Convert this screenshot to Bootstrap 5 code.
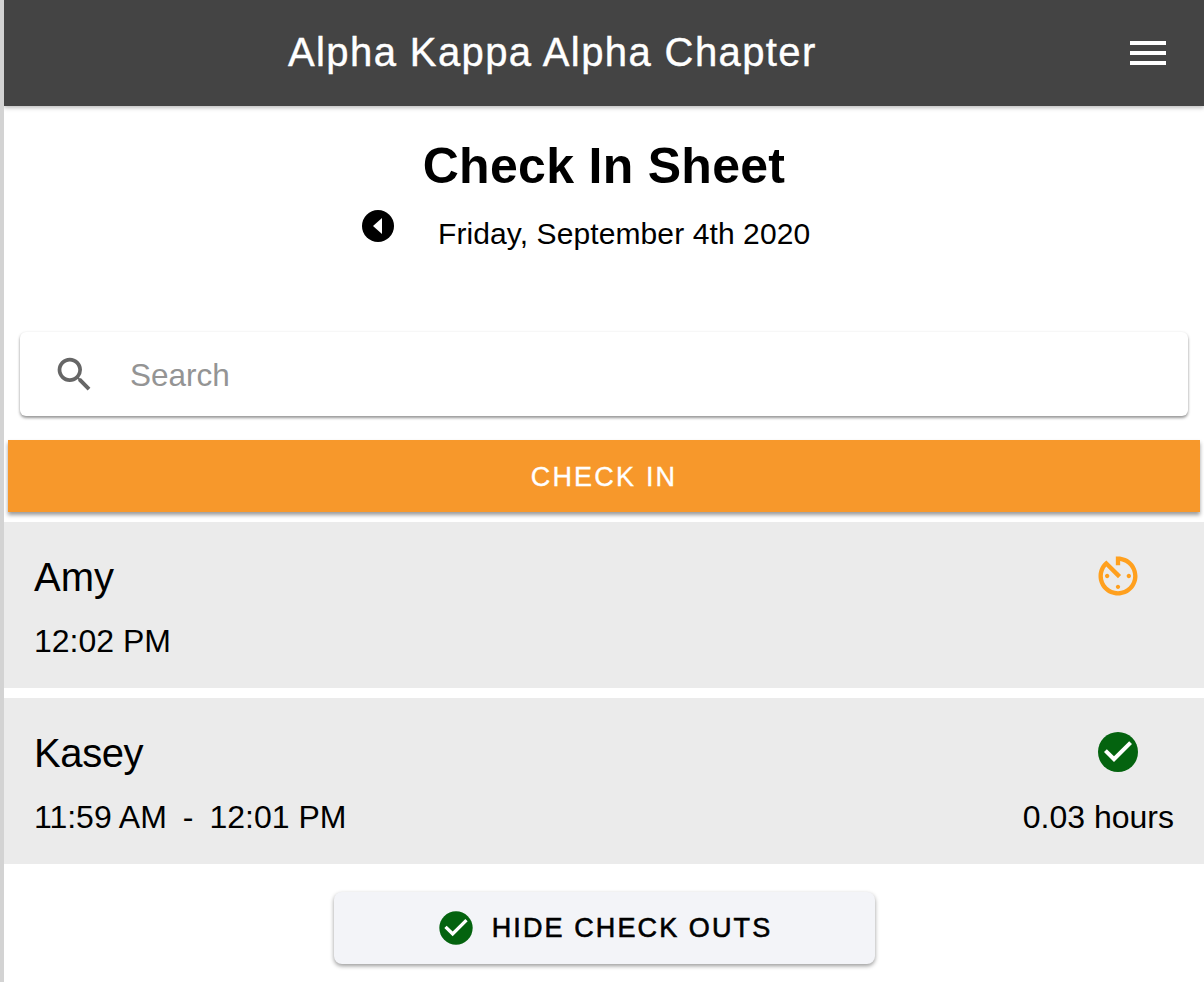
<!DOCTYPE html>
<html lang="en">
<head>
<meta charset="utf-8">
<title>Check In Sheet</title>
<link href="https://cdn.jsdelivr.net/npm/bootstrap@5.3.0/dist/css/bootstrap.min.css" rel="stylesheet">
<style>
html,body{height:982px;overflow:hidden}
body{border-left:4px solid #d3d3d3;font-family:"Liberation Sans",Arial,sans-serif;color:#000;background:#fff}
.top-bar{height:106px;background:#444;color:#fff;box-shadow:0 2px 4px rgba(0,0,0,.25);padding-left:284px;padding-right:38px}
.top-title{font-size:40px;letter-spacing:1.4px;line-height:1;margin:0 0 2px;font-weight:400;-webkit-text-stroke:.4px #fff}
.burger{width:36px;display:flex;flex-direction:column;gap:6px;background:none;border:0;padding:0}
.burger span{display:block;height:4px;background:#fff}
.sheet-title{font-size:50px;letter-spacing:.3px;font-weight:700;line-height:56px;margin:0;padding-top:32px;text-align:center}
.date-row{height:42px;margin-top:16px;padding-left:358px}
.date-text{font-size:30px;letter-spacing:.1px;line-height:36px;margin:6px 0 0 44px}
.search-box{height:84px;margin:80px 16px 0;background:#fff;border-radius:6px;box-shadow:0 2px 3px rgba(0,0,0,.4),0 0 3px rgba(0,0,0,.06);padding-left:32px}
.search-input{border:0;outline:0;flex:1;font-family:"Liberation Sans",Arial,sans-serif;font-size:31.5px;margin-left:31px;color:#333;background:transparent;padding:4px 0 0 2px}
.search-input::placeholder{color:#949494;opacity:1}
.checkin-btn{display:block;height:72px;width:calc(100% - 8px);margin:24px 4px 0;padding-top:4px;background:#f7982b;color:#fff;border:0;border-radius:0;font-size:27px;letter-spacing:2.2px;-webkit-text-stroke:.35px #fff;box-shadow:0 3px 4px rgba(0,0,0,.4)}
.entry{background:#ebebeb;height:166px;padding:30px 30px 0}
.entry-first{margin-top:10px}
.entry-next{margin-top:10px}
.entry-name{font-size:40px;line-height:50px}
.name-tight{letter-spacing:-.4px}
.entry-time{font-size:32px;line-height:40px;margin-top:19px}
.entry-side{width:170px;text-align:right}
.entry-side svg{display:block;margin-left:auto}
.clock-icon{margin-right:30px;margin-top:-2px}
.done-icon{margin-right:32px}
.side-hours{margin-top:21px}
.gap-dash{margin:0 16px}
.hide-btn{width:541px;height:72px;margin:28px auto 0;padding-top:0;background:#f3f4f8;border:0;border-radius:8px;font-size:27px;letter-spacing:2.1px;color:#000;-webkit-text-stroke:.6px #000;box-shadow:0 2px 4px rgba(0,0,0,.4)}
.hide-label{margin-top:2px}
</style>
</head>
<body>
<header class="top-bar d-flex align-items-center justify-content-between">
  <h1 class="top-title">Alpha Kappa Alpha Chapter</h1>
  <button class="burger" type="button" aria-label="Menu"><span></span><span></span><span></span></button>
</header>
<main>
  <h2 class="sheet-title">Check In Sheet</h2>
  <div class="date-row d-flex align-items-start">
    <svg width="32" height="32" viewBox="0 0 32 32" aria-label="Previous day"><circle cx="16" cy="16" r="16" fill="#000"/><path d="M20 8v16l-9-8z" fill="#fff"/></svg>
    <span class="date-text">Friday, September 4th 2020</span>
  </div>
  <div class="search-box d-flex align-items-center">
    <svg width="45" height="45" viewBox="0 0 24 24" fill="#666"><path d="M15.5 14h-.79l-.28-.27A6.47 6.47 0 0 0 16 9.5 6.5 6.5 0 1 0 9.5 16c1.61 0 3.09-.59 4.23-1.57l.27.28v.79l5 4.99L20.49 19l-4.99-5zm-6 0C7.01 14 5 11.99 5 9.5S7.01 5 9.5 5 14 7.01 14 9.5 11.99 14 9.5 14z"/></svg>
    <input class="search-input" type="text" placeholder="Search">
  </div>
  <button class="checkin-btn" type="button">CHECK IN</button>
  <section class="entry entry-first d-flex justify-content-between">
    <div>
      <div class="entry-name">Amy</div>
      <div class="entry-time">12:02 PM</div>
    </div>
    <div class="entry-side">
      <svg class="clock-icon" width="52" height="52" viewBox="0 0 24 24" fill="#ffa01e"><path d="M11 17c0 .55.45 1 1 1s1-.45 1-1-.45-1-1-1-1 .45-1 1zm0-14v4h2V5.08c3.39.49 6 3.39 6 6.92 0 3.87-3.13 7-7 7s-7-3.13-7-7c0-1.68.59-3.22 1.58-4.42L12 13l1.41-1.41-6.8-6.8v.02C4.42 6.45 3 9.05 3 12c0 4.97 4.02 9 9 9 4.97 0 9-4.03 9-9s-4.03-9-9-9h-1zm7 9c0-.55-.45-1-1-1s-1 .45-1 1 .45 1 1 1 1-.45 1-1zM6 12c0 .55.45 1 1 1s1-.45 1-1-.45-1-1-1-1 .45-1 1z"/></svg>
    </div>
  </section>
  <section class="entry entry-next d-flex justify-content-between">
    <div>
      <div class="entry-name name-tight">Kasey</div>
      <div class="entry-time">11:59 AM<span class="gap-dash">-</span>12:01 PM</div>
    </div>
    <div class="entry-side">
      <svg class="done-icon" width="48" height="48" viewBox="0 0 24 24"><circle cx="12" cy="12" r="10" fill="#04630f"/><path d="M10 17l-5-5 1.41-1.41L10 14.17l7.59-7.59L19 8l-9 9z" fill="#fff"/></svg>
      <div class="entry-time side-hours">0.03 hours</div>
    </div>
  </section>
  <button class="hide-btn d-flex align-items-center justify-content-center gap-3" type="button">
    <svg width="40" height="40" viewBox="0 0 24 24"><circle cx="12" cy="12" r="10" fill="#04630f"/><path d="M10 17l-5-5 1.41-1.41L10 14.17l7.59-7.59L19 8l-9 9z" fill="#fff"/></svg>
    <span class="hide-label">HIDE CHECK OUTS</span>
  </button>
</main>
<script src="https://cdn.jsdelivr.net/npm/bootstrap@5.3.0/dist/js/bootstrap.bundle.min.js"></script>
</body>
</html>
